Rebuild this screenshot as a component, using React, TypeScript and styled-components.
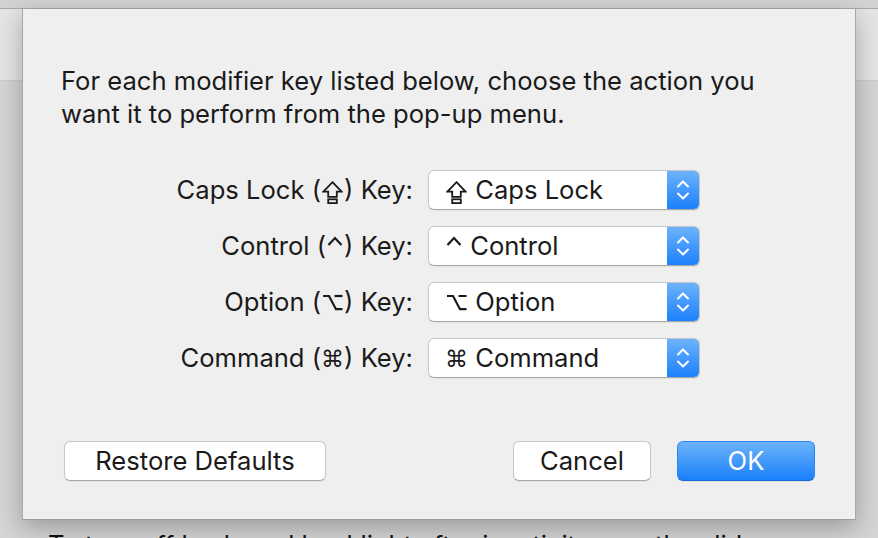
import React from "react";
import styled, { createGlobalStyle } from "styled-components";

const Global = createGlobalStyle`
  html, body { margin: 0; padding: 0; }
  body {
    width: 878px; height: 538px; overflow: hidden;
    font-family: Inter, "Helvetica Neue", "Liberation Sans", "DejaVu Sans", sans-serif;
    -webkit-font-smoothing: antialiased;
  }
`;

const Desktop = styled.div`
  position: relative;
  width: 878px;
  height: 538px;
  overflow: hidden;
  background: #d6d6d6;
  display: flex;
  flex-direction: column;
`;

const TitleStrip = styled.div`
  height: 8px;
  background: #d4d3d4;
  border-bottom: 1px solid #a9a9a9;
  flex: none;
`;

const ToolbarArea = styled.div`
  height: 71px;
  background: #e5e5e5;
  border-bottom: 1px solid #cdcdcd;
  flex: none;
`;

const BackContent = styled.div`
  flex: 1;
  min-height: 0;
  overflow: hidden;
  background: #d5d5d5;
  padding: 448px 0 0 48px;
`;

const BackText = styled.div`
  font-size: 25.6px;
  line-height: 32px;
  color: #111;
  white-space: nowrap;
`;

const Sheet = styled.div`
  position: absolute;
  left: 22px;
  top: 9px;
  width: 834px;
  height: 511px;
  box-sizing: border-box;
  background: #efefef;
  border-left: 1px solid #a8a8a8;
  border-right: 1px solid #a8a8a8;
  border-bottom: 1px solid #9e9e9e;
  box-shadow: 0 8px 24px rgba(0, 0, 0, 0.28);
  padding: 55px 40px 0 38px;
  display: flex;
  flex-direction: column;
  color: #1a1a1a;
`;

const Intro = styled.p`
  margin: 0;
  font-size: 25.6px;
  line-height: 33px;
`;

const Rows = styled.div`
  margin-top: 40px;
  display: grid;
  grid-template-columns: 352px 272px;
  grid-auto-rows: 40px;
  column-gap: 15px;
  row-gap: 16px;
  align-items: center;
`;

const Label = styled.div`
  text-align: right;
  font-size: 25.6px;
  line-height: 40px;
  height: 40px;
  white-space: nowrap;
`;

const TextSym = styled.span`
  font-family: "DejaVu Sans", sans-serif;
  font-size: 23px;
`;

const IconSvg = styled.svg<{ $drop: number; $mx: number }>`
  display: inline-block;
  vertical-align: ${(p) => -p.$drop}px;
  margin: 0 ${(p) => p.$mx}px;
`;

const Popup = styled.div`
  height: 40px;
  box-sizing: border-box;
  display: flex;
  background: #fff;
  border-radius: 6px;
  border: 1px solid #c6c6c6;
  border-bottom-color: #a9a9a9;
  box-shadow: 0 1px 1px rgba(0, 0, 0, 0.06);
  overflow: hidden;
`;

const PopupText = styled.div`
  flex: 1;
  padding-left: 16px;
  font-size: 25.6px;
  line-height: 38px;
  white-space: nowrap;
`;

const Stepper = styled.div`
  width: 32px;
  flex: none;
  background: linear-gradient(#6db3fb, #1b80fb);
  display: flex;
  align-items: center;
  justify-content: center;
`;

const Footer = styled.div`
  margin-top: 63px;
  display: flex;
  align-items: center;
  padding-left: 3px;
`;

const Button = styled.button<{ $primary?: boolean; $w: number }>`
  width: ${(p) => p.$w}px;
  height: 40px;
  box-sizing: border-box;
  border-radius: 6px;
  font-family: inherit;
  font-size: 25.6px;
  line-height: 38px;
  padding: 0;
  cursor: default;
  border: 1px solid ${(p) => (p.$primary ? "#2a86f6" : "#c6c6c6")};
  border-bottom-color: ${(p) => (p.$primary ? "#1766d8" : "#a9a9a9")};
  background: ${(p) => (p.$primary ? "linear-gradient(#6cb3fa, #1a80fb)" : "#fff")};
  color: ${(p) => (p.$primary ? "#fff" : "#1a1a1a")};
  box-shadow: 0 1px 1px rgba(0, 0, 0, 0.06);
`;

const Spacer = styled.div`
  flex: 1;
`;

const Gap = styled.div`
  width: 26px;
`;

const Chevrons = () => (
  <svg width="14" height="26" viewBox="0 0 14 26" fill="none">
    <path d="M2 9.5 L7 4.5 L12 9.5" stroke="#fff" strokeWidth="2" strokeLinecap="round" strokeLinejoin="round" />
    <path d="M2 16.5 L7 21.5 L12 16.5" stroke="#fff" strokeWidth="2" strokeLinecap="round" strokeLinejoin="round" />
  </svg>
);

const CapsIcon = ({ mx }: { mx: number }) => (
  <IconSvg $drop={5} $mx={mx} width="21" height="23" viewBox="0 0 21 23" fill="none" aria-label="⇪">
    <path
      d="M10.5 1.2 L19.6 10.6 L14.8 10.6 L14.8 15.9 L6.2 15.9 L6.2 10.6 L1.4 10.6 Z"
      stroke="#1a1a1a"
      strokeWidth="1.8"
      strokeLinejoin="miter"
    />
    <rect x="6.2" y="18.3" width="8.6" height="3.8" stroke="#1a1a1a" strokeWidth="1.8" />
  </IconSvg>
);

const OptionIcon = ({ mx }: { mx: number }) => (
  <IconSvg $drop={0} $mx={mx} width="21" height="17" viewBox="0 0 21 17" fill="none" aria-label="⌥">
    <path d="M1 2 H7 L14 15.2 H20.5" stroke="#1a1a1a" strokeWidth="2.2" strokeLinejoin="miter" />
    <path d="M12.5 2 H20.5" stroke="#1a1a1a" strokeWidth="2.2" />
  </IconSvg>
);

const CaretIcon = ({ mx }: { mx: number }) => (
  <IconSvg $drop={-9} $mx={mx} width="16" height="10" viewBox="0 0 16 10" fill="none" aria-label="^">
    <path d="M1.5 9 L8 2 L14.5 9" stroke="#1a1a1a" strokeWidth="2.2" strokeLinejoin="miter" />
  </IconSvg>
);

type Sym = "caps" | "ctrl" | "opt" | "cmd";

const Symbol = ({ kind, mx }: { kind: Sym; mx: number }) => {
  if (kind === "caps") return <CapsIcon mx={mx} />;
  if (kind === "opt") return <OptionIcon mx={mx} />;
  if (kind === "ctrl") return <CaretIcon mx={mx} />;
  return <TextSym>⌘</TextSym>;
};

const rows: { label: string; sym: Sym; value: string }[] = [
  { label: "Caps Lock", sym: "caps", value: "Caps Lock" },
  { label: "Control", sym: "ctrl", value: "Control" },
  { label: "Option", sym: "opt", value: "Option" },
  { label: "Command", sym: "cmd", value: "Command" },
];

export default function App() {
  return (
    <Desktop>
      <Global />
      <TitleStrip />
      <ToolbarArea />
      <BackContent>
        <BackText>To turn off keyboard backlight after inactivity, use the slider</BackText>
      </BackContent>
      <Sheet>
        <Intro>
          For each modifier key listed below, choose the action you
          <br />
          want it to perform from the pop-up menu.
        </Intro>
        <Rows>
          {rows.map((r) => (
            <React.Fragment key={r.label}>
              <Label>
                {r.label} (<Symbol kind={r.sym} mx={1} />) Key:
              </Label>
              <Popup>
                <PopupText>
                  <Symbol kind={r.sym} mx={1} /> {r.value}
                </PopupText>
                <Stepper>
                  <Chevrons />
                </Stepper>
              </Popup>
            </React.Fragment>
          ))}
        </Rows>
        <Footer>
          <Button $w={262}>Restore Defaults</Button>
          <Spacer />
          <Button $w={138}>Cancel</Button>
          <Gap />
          <Button $w={138} $primary>
            OK
          </Button>
        </Footer>
      </Sheet>
    </Desktop>
  );
}
